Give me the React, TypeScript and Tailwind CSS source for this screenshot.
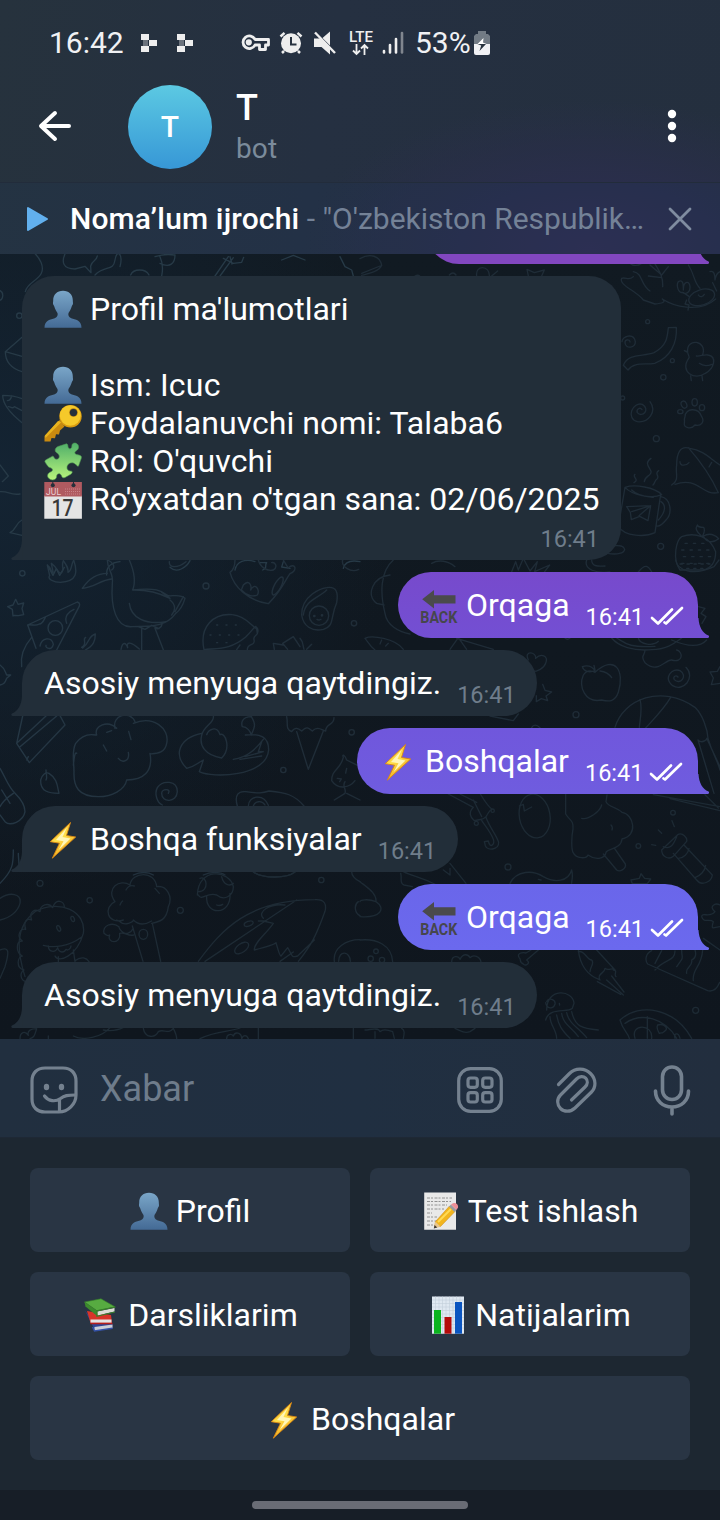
import type { ReactNode } from 'react';

type EmojiName = 'user' | 'key' | 'puzzle' | 'calendar' | 'back' | 'bolt' | 'memo' | 'books' | 'chart';

function EmojiArt({ name }: { name: EmojiName }) {
  switch (name) {
    case 'user':
      return (
        <>
          <defs>
            <linearGradient id="user" x1="0" y1="0" x2="0" y2="1">
              <stop offset="0" stopColor="#7aa6c8" />
              <stop offset="1" stopColor="#446a95" />
            </linearGradient>
          </defs>
          <path fill="url(#user)" d="M19 .7c6 0 9.800 3.800 9.800 9.600 0 1.700.3 2 .2 3.200-.1 1.500-1 1.700-1.300 3-.8 3-2.200 5-3.200 6.500-.6 2 .2 4.300 2.700 5.200 4 1.500 10.300 1.600 10.300 9.600H.5c0-8 6.300-8.100 10.300-9.600 2.500-.9 3.300-3.200 2.700-5.200-1-1.500-2.400-3.500-3.200-6.500-.3-1.300-1.200-1.500-1.300-3-.1-1.200.2-1.500.2-3.200C9.200 4.500 13 .7 19 .7Z" />
        </>
      );
    case 'key':
      return (
        <>
          <path fill="#c98a10" d="M15.500 16 .5 32v5.500h6l1-3.500 3.500.3 1-4 3 .2 1-4 4.500-4Z" />
          <path fill="#e8b31e" d="M14 17 1 31.500l.5 2.500L17.500 18Z" />
          <ellipse cx="26.500" cy="12.300" rx="11.200" ry="11.300" fill="#d99a10" />
          <ellipse cx="26.300" cy="11.500" rx="10.500" ry="10.300" fill="#f5c92a" />
          <circle cx="29.500" cy="8.500" r="4.300" fill="#b87d0c" />
          <circle cx="29.500" cy="8.600" r="3.600" fill="#25303b" />
        </>
      );
    case 'puzzle':
      return (
        <>
          <defs>
            <linearGradient id="puzzle" x1="0" y1="0" x2="0" y2="1">
              <stop offset="0" stopColor="#4fae6a" />
              <stop offset="1" stopColor="#b9f57c" />
            </linearGradient>
          </defs>
          <path fill="url(#puzzle)" stroke="#4d9a52" strokeWidth=".6" d="m14 4.500 8.500-2.700c2 .5 1 3 2 4.300 1.500 1.500 3.300.3 3.300-1.600C27.800 1 30.500.5 32.500 1.500s3 4 1 6.300c-1 1.200-3 1.500-2.700 3.300.4 1.600 3 1.700 5 2.200 1.300.5 2 1.400 1.500 3L34.500 24c-1.500 1-2.500-2.500-5-3-3-.8-6 1-6.500 3.800-.4 2.700 1.500 4.500 4.500 4.400 1.500.3.500 1.700-.3 2.800L21 35.500c-2 1-3-.4-3.600-2-.7-1.800-2.700-2.400-4-1.200-1.200 1.200-.4 3-1.500 4.300-1.700 2-5.600 1.700-7.400-.6-1.700-2-.8-4.500 1-5.500 1.300-.9 3-1 3-2.700 0-2.200-3.500-1.700-4.800-3.800L1 20c-.4-1.300.3-1.800 1.500-2.500l6-3.300c1.500-.3 1.200 2 3 2.900 2.200.8 4-.8 3.800-3-.2-2.500-3.300-3-4-5-.6-2 1-3.900 2.700-4.600Z" />
        </>
      );
    case 'calendar':
      return (
        <>
          <path fill="#e4e4e4" d="M.3 15.500h37.600v23.200H.3z" />
          <path fill="#b05a60" d="M.3 2h37.600v14.500H.3z" />
          <circle cx="8.800" cy="5.300" r="2" fill="#26303a" />
          <circle cx="29.500" cy="5.300" r="2" fill="#26303a" />
          <path stroke="#26303a" d="M8.800 2v3m20.700-3v3" />
          <path stroke="#c98489" strokeDasharray="1 1" d="M21 9h15M21 11.500h15M21 14h15" />
          <text x="2" y="14.500" fontSize="8.500" fill="#ead0d2" fontFamily="Roboto" textLength="15">JUL</text>
          <text x="7.500" y="35.800" fontSize="24" fontWeight="500" fill="#383838" fontFamily="Roboto" textLength="22" lengthAdjust="spacingAndGlyphs">17</text>
        </>
      );
    case 'back':
      return (
        <>
          <path fill="#4a4a4c" d="M2.200 13.200 14 4v5.200h21.500V17.500H14V22.500Z" />
          <text x=".3" y="36.500" fontSize="17" fontWeight="700" fill="#46464c" fontFamily="Roboto" textLength="37" lengthAdjust="spacingAndGlyphs">BACK</text>
        </>
      );
    case 'bolt':
      return (
        <>
          <defs>
            <linearGradient id="bolt" x1="0" y1="0" x2=".5" y2="1">
              <stop offset="0" stopColor="#f3a51e" />
              <stop offset=".5" stopColor="#ffe04a" />
              <stop offset="1" stopColor="#f0a218" />
            </linearGradient>
          </defs>
          <path fill="url(#bolt)" stroke="#d98612" strokeWidth=".9" d="M26.500 2.500 6.300 21.700l9.200 1.500L8.300 38.200 31.700 17l-9.200-1.500Z" />
          <path fill="#fff6b8" d="m23 7.500-11 12.500 7.500 1.200-5 9 12-11.700-8-1.500Z" />
        </>
      );
    case 'memo':
      return (
        <>
          <path fill="#e9e9e9" d="M2.200.5H34v37.200H2.200z" />
          <path stroke="#888" strokeWidth=".9" strokeDasharray="3 1 2 1.500" d="M5 6h25M5 9.500h24M5 13h20M5 17h17M5 21h5M5 25h10M5 29h10M5 33h7" />
          <path fill="#f2b51e" stroke="#c98712" strokeWidth=".5" d="m27.500 14 5.500 5.500-14.500 15-6 .7 1-5.700Z" />
          <path stroke="#ffda55" strokeWidth="2" d="m29 17-13 13" />
          <path fill="#e8c68e" d="m13.400 29.500 5 5-6.300 1.700Z" />
          <path fill="#3d3a36" d="m12.600 33 2.600 2.500-3.400 1Z" />
          <path fill="#9b9da0" d="m27 14.500 2-2 5.500 5.500-2 2Z" />
          <path fill="#ee8f96" d="m29 12.500 2-1.300c3-.8 5.500 1.500 5 4.300L34.500 18Z" />
        </>
      );
    case 'books':
      return (
        <>
          <path fill="#2f4595" d="m3 14.500 8 16 1.500 4.500 18-3v-4L10 24Z" />
          <path fill="#c9cdd8" d="m12.500 31 18-2.500v3.700L12.500 35Z" />
          <path stroke="#3451a6" strokeWidth="1.400" d="m10.500 31 2 4 18-2.700" fill="none" />
          <path fill="#d8342a" d="m5 15 3.500 12h21.500L29 19Z" />
          <path fill="#e4e4e4" d="M8.500 23.500h21v3.300h-21z" />
          <path fill="#b51f1d" d="M8 26.800h22.500v1.500H8.500Z" />
          <path fill="#57ab41" stroke="#347d28" strokeWidth=".6" d="M2.500 6 19 2.800l14 8-18 4Z" />
          <path fill="#3c8a2d" d="M2.500 6 15 14.800V20L3.500 10.500Z" />
          <path fill="#dcdcd6" d="M15 15.500 32.500 12v3.500L15.500 19.600Z" />
          <path stroke="#397f2c" strokeWidth="1.200" fill="none" d="M33.500 11 15 14.800V20.300l18-4.300" />
        </>
      );
    case 'chart':
      return (
        <>
          <path fill="#dfe8f1" d="M3 .5h32v37.200H3z" />
          <path stroke="#c3cfda" strokeWidth=".6" d="M3 4h32M3 7.500h32M3 11h32M3 14.500h32M3 18h32M3 21.500h32M3 25h32M3 28.500h32M3 32h32M6.500.5v37M10 .5v37M13.500.5v37M17 .5v37M20.500.5v37M24 .5v37M27.500.5v37M31 .5v37" />
          <path fill="#0bb41f" d="M5 14h7v23.700H5z" />
          <path fill="#b40a0a" d="M15.500 21h7v16.700h-7z" />
          <path fill="#0b55c0" d="M26 6h7v31.700h-7z" />
        </>
      );
  }
}

function Emoji({ name }: { name: EmojiName }) {
  return (
    <svg className="mr-2 inline-block h-[38px] w-[38px] shrink-0 overflow-visible align-top" viewBox="0 0 38 38" fill="none">
      <EmojiArt name={name} />
    </svg>
  );
}

function Wallpaper() {
  return (
    <svg className="absolute inset-0 h-full w-full" viewBox="0 254 720 785" fill="none" strokeWidth="4" strokeLinecap="round" strokeLinejoin="round">
      <defs>
        <linearGradient id="ink" gradientUnits="userSpaceOnUse" x1="0" y1="0" x2="1080" y2="300">
          <stop offset="0" stopColor="#263947" />
          <stop offset="1" stopColor="#1f2c37" />
        </linearGradient>
      </defs>
      <g transform="translate(0 260) scale(.33333)" stroke="#273a47">
        <path d="M106-18c12 12 28 36 18 58S80 70 76 95M195-18c-10 22-8 45 30 45l30-8 18 19-1-20c6-20 16-12 20-30M285 45c30-30 55-10 60-45s25-20 15 20M392 45c8-20 45-20 55 0M465-10c30-5 25-10 60-5 0 25-15 40-45 25M480-10c8 18 10 35 5 58M645 48l40-58M660 48l40-55M670-5l30 15 25-3 6-15M690-10l6 22M845 0l35-14 35 14M1020-10l15 30 20 10 5 18" />
        <circle cx="58" cy="167" r="8" /><path d="M0 92c12 6 10 25 0 29M66 232 16 275c0 35 25 52 50 60M16 275l50 14M66 416c-20-8-40-10-58-10 0 25 20 52 58 82M25 440c10 0 10 8 18 0l23 12M35 408c-2 8-5 14-13 14M0 615l25 33-18 17M0 695c25-3 30 12 60 7M66 780c-20 10-16 28-36 38l36 8" />
        <path d="M145 920l14 26 10-20 10 20 14-24M320 945c-2-30 20-38 40-40M510 922c20 20 50 0 60-20M705 930c5-25 30-35 60-25M780 908h20c-8 8 5 15-12 22M850 905l-5 16 25 4M1030 925c5-20 25-25 50-20" />
      </g>
      <g transform="translate(360 260) scale(.33333)" stroke="#1f2c37">
        <path d="M0-4c30-18 60-8 65 20-10 20-40 25-60 30M5 40 60 18M165 48c8-4 12-2 14 0M268 45c8-8 14-8 20 0M350 48c-5-35 40-32 38 0M395 48l18-15M505 48l-4-20 22 10 30-8-8 18M785 55c-10 20 45 38 65 65l35 12c20-2 35-5 22-15 30 20 110 45 160 0M785 55c10-5 25 8 35-5M820 35c30 5 20 40 50 58M875-5c20 35 35 50 33 85M870 15l35 30 20-25M985 15c20 30 15 50 35 70M810-10c-10 30 20 30 35 20l-5-20M865 48l40 5" />
        <ellipse cx="1025" cy="112" rx="40" ry="23" transform="rotate(-18 1025 112)" />
        <path d="M955 65c15-8 15 8 15 25 0-28 20-30 20-8 0 20-20 22-22 15-13 5-20-22-13-32M1050 35c12-5 15 10 15 25 3-20 15-25 15-25M970 98l18 12M1058 68l12 25M980 120l-5 12 12 3-3 15M1015 105c5 8 15 5 18-2" />
        <circle cx="863" cy="185" r="6" /><circle cx="937" cy="302" r="6" /><circle cx="910" cy="352" r="8" /><circle cx="788" cy="414" r="6" /><circle cx="889" cy="536" r="9" /><circle cx="902" cy="859" r="9" />
        <path d="M786 245c0-16 35-28 40 0 0 18-28 24-31 4-1-12 15-12 15-3M925 203l24-1c3 48-18 90-65 108-30 5-62-5-80 20l-14-14c15-38 60-25 92-38 38-20 40-45 43-75ZM1028 285c15-45-50-52-45-10l-10-3 10 5c2 12 8 15 3 18-28 40 18 68 50 45 28-15 35-50 8-55-10-3-25 5-35 3M1018 310c10 8 20 10 38 3M992 348l2 14M1026 348l2 14" />
        <path d="M870 425c22 30-5 64-38 60-35-10-15-60 15-52 25 15 0 42-15 25-4-10 8-18 14-9" />
        <path d="M975 470c0-25 40-30 50 0 10 15-2 30-20 25-12 15-35 8-32-5 2-8-2-10 2-20Z" /><ellipse cx="972" cy="434" rx="8" ry="11" transform="rotate(-25 972 434)" /><ellipse cx="1004" cy="427" rx="8" ry="11" /><ellipse cx="1026" cy="443" rx="8" ry="9" /><ellipse cx="961" cy="455" rx="8" ry="6" />
        <path d="M935 675c25-15 10-35 15-60 0-35 10-60 40-50 40 5 65 35 90 50M985 563c35 40 65 80 90 135-50 10-60-50-130-25M960 605c0 15 20 12 27 3M1055 607l-8 14M825 643c-10 8 15 15-3 25M873 595c-30 20 15 35-5 50-10 8-15 10-15 20M896 632c-15 10 5 15-5 25-8 5-5 12-12 18M795 682 775 800c20 30 80 32 110 18l17-115M795 682c30-10 90 0 110 22-30 15-90 0-110-22ZM815 690c20 20 50 20 65 22M903 710c30 5 35 50 15 70-10 12-20 20-28 18M903 725c15 10 15 30-8 55M800 740l72-3-8 45-25-13-25 10-3-22ZM815 755l57-18-35 30" />
        <path d="M965 830c40-15 85 0 102 45 0 25-10 50-40 55H960c-25-35-10-90 5-100ZM1012 795c-12 18 10 30 15 35 5-12 10-18 4-28-8 0-18-2-19-7ZM1030 828c18-10 35-3 46 8-15 12-35 15-46-8" />
        <path strokeDasharray="7 18" d="M975 850h75M965 870h90M970 890h85M965 910h90" />
        <path d="M742 880c30 5 50 0 52-12-5-18-30-8-40-12" />
      </g>
      <g transform="translate(360 560) scale(.33333)" stroke="#1f2c37">
        <path d="M100 0C60 35 60 100 75 160c5 35 40 55 75 62M90 45C40 50 15 105 50 130l22 5M215 10c20-12 50-8 70 10M455 35l12-30 8 25 15-35 20 38 22-28-8 30 45-20-15 20M680 0c-10 30 30 40 70 36M695 0c0 18 15 20 40 18M835 36c20-25 30-20 40 0" />
        <path d="M947 0c5 30 50 50 115 20l15-20" /><path strokeDasharray="7 14" d="M960 12h90M980 25h65" />
        <path d="M15 235c20-10 90 0 115 33M15 235c10 12 15 25 30 35M65 240l-5 12M85 250l-8 8M270 268l25-35 25 35M290 235l110 33M505 300c-15-30 25-25 22-5 15-15 40-10 30 15-5 15-25 25-40 25M548 373l7 18 20 5-17 12 5 14-19-6-15 9v-18" />
        <path d="M755 234c20 25 65 40 120 35 50 0 75-25 90-35M770 234c25 15 35 30 115 25M835 234c5 20 45 25 60 10M855 270c0 18-15 15 0 38 40 35 60-10 80-8 35 10 35-25 15-30M1015 140l20 5-12 15 15 10-12 20M935 240c35 15 80 28 105 0" /><path d="M615 234c5 5 10 5 15 0" />
        <path d="M705 337c60-55 90-5 70 60-10 30-30 28-50 23-50 10-70-40-55-75 8-12 20-16 35-8ZM667 320c15-5 28-2 38 12-20 8-35 0-38-12ZM705 330l-3-14M720 333c15 2 25 5 35 20" />
        <path d="M978 322c30 30-8 75-40 55-30-25 0-55 22-45 25 15 0 45-17 27-5-10 5-15 11-8M1080 320l-8 14-22 2 10 18-6 20 26-4" />
        <circle cx="648" cy="464" r="9" /><path d="M765 502c25-85 140-130 240-60 20 20 38 60 40 100M840 418c8 30 0 60-2 84M932 412c-20 35-60 75-75 92M1014 540c10 10 20 5 30-5 15 50 30 70 36 95M1014 540l48 160M1040 535l40 85M390 468l70 14 15-20M515 503c5-10 15-10 25 0" />
      </g>
      <g transform="translate(0 560) scale(.33333)" stroke="url(#ink)">
        <circle cx="67" cy="40" r="8" /><circle cx="618" cy="78" r="9" /><circle cx="1062" cy="190" r="8" /><circle cx="1055" cy="517" r="8" /><circle cx="850" cy="630" r="8" />
        <path d="M142 15c15 10 10 25 18 25l-6-30c20 15 20 30 28 30 15-8 0-20 8-38 10 15 15 20 14 35 12-5 8-20 17-37 12 35 12 65-40 67-20 0-40-10-32-20ZM508 5c-2 20 25 20 50 0M1028 0c-5 20 25 40 48 28" />
        <path d="m47 118 7 15 17-4-5 17 5 18-16 3-12-1-4 2-2-20-14-8 16-5Z" />
        <path d="M232 126c10 3 8 10 2 20L170 270M232 126 83 195l25 70M83 195c15-3 20 5 35-3 10 0 15-15 18-20M200 190c-8-20 5-35 22-42M120 258c5-25 35-30 40-5-5 20-25 12-22 3M65 320c-5-35 10-65 30-88" /><circle cx="166" cy="204" r="22" />
        <path d="M245 262c20-10 0-25 12-30M248 264c25-20 15-35 38-42 0 20-5 35-30 48" />
        <path d="M322 40c-30 0-55 15-75 45 35-3 55-25 88-28M335 30c15-10 0-25-12-30M322 0c0 30 20 40 15 70-5 70 10 135 60 130 70 0 105-5 130-40 15-10 22-25 28-45-15-15-40-5-50-8-20-15-40-25-107-17 10-25 5-55-10-90M405 90c50 0 85 15 105 25l-25-18M388 130c5 45 50 65 110 55M510 120c20 15 15 35 5 45M525 155l25-45M425 205v64M465 205l25 64M415 200l20 8 20-12 22 10M487 190c-2 12-15 22-22 12M363 268c5-25 15-20 20-5-5-20 10-18 35 4" />
        <path d="M705 0c0 20-5 30-15 37 12 45 55 85 115 94 40-40 50-70 65-90 25-10 15-35-5-18M850 0l15 25M775 0c5 20 25 35 45 30 15-10 5-25-5-22M730 75c20-20 25 5 22 15 12-25 30 0 20 15-10 5-30 5-48-15Z" /><ellipse cx="833" cy="78" rx="10" ry="30" transform="rotate(28 833 78)" />
        <path d="M612 269c-15-70 30-110 85-105 45 3 70 50 75 40 10 25-15 20-10 35 5 20-20 10-20 30M612 269c45-5 80 0 125-38 35-35 30-45 35-10M720 255l-10 14" /><path strokeDasharray="3 25" d="M650 195h80M630 225h90M650 248h40" />
        <path d="M905 165c0-60 60-80 75-82 30-5 35 15 30 45-20 45-5 70-40 80-35 8-60-10-65-43ZM910 165c5-45 45-50 70-75" /><circle cx="957" cy="167" r="29" /><circle cx="943" cy="168" r="2" /><circle cx="966" cy="166" r="2" /><path d="M951 178c5 3 8 3 12 0M823 268l-3-18 30 5M863 268l-15-18 32-20 20 30M900 235c10 10 8 20 12 33M920 268l15-15" />
        <path d="M68 468 50 550l38 58 107-113-15-28M50 550l88-82M60 560l110-92M80 600l5-10M0 315c15 10 15 20 20 30l12 0-12 10c-5 15-10 18-20 20" />
        <path d="M290 525c-10-30 35-45 60-20M345 505c-10-40 45-55 60-20M400 490c60-25 110 15 100 60-5 30-30 30-50 32M450 580c10 55-20 80-70 80M380 660c-5 30-45 50-85 50-60 0-75-30-73-75 0-30-8-60 5-85 15-20 35-30 60-25M220 615c3-25 5-40 10-35M320 517l15-5M310 555l10 18M386 514l7 25M355 595c12 15 35 10 30-18" />
        <path d="M640 468c5 20-30 30-35 58-8 30 10 60 60 68 30-30 10-80-5-70-10-30-35-15-40 0M605 520c-70 15-85 65-45 105 25-5 30-15 50-25l-12 35c40 20 200 15 208-65 0-40-25-50-70-45M755 470c-35 0-30 25-28 30 15 0 25 15 27 25 10-25 15-30 0-55M700 598c45-5 70-35 90-60M735 590l55-15-15 0 10-30M720 598l65-10" />
        <path d="M860 470c5 25-5 35 15 45 10-15 20-10 30-2 15-15 20-10 32 0 15-15 25-5 40 0 0-25 25-15 25-40M890 515l35 113 45-115" />
        <path d="M138 630c0 15 5 20 0 30M122 660c-2 35 25 40 55 40-5-20-5-45-30-60-10-5-22 5-25 20ZM505 700c10-15-20-15-20 0 0 30 45 28 47-5 0-35-45-35-60-12-10 20 0 45 15 52" />
        <path d="M0 625c20 35 25 55 45 75 15 15 30 35 30 55-5 30-45 45-60 30L0 765M5 690l25 40M40 700c-15 10-30 20-40 40" />
        <path d="M712 738c-10-35 5-45 25-43 40 5 50 5 70-2 50 5 75 10 105 45M745 738c0-30 45-40 60-2M760 738c5-15 25-18 35-3M1080 620l-40-20c-5-15-15-20-10-8-10 40-35 35-35 70 20 30 55 20 70 0M1035 665c-10 15 5 20 0 35l-32 20M1040 700l40 20M1040 625l-3 14M1012 655l12 2-5 8" />
        <path d="M0 970c40-40 40-60 40-100M55 880c0 20 5 40 0 50M400 945c20-10 45-10 60 0M610 945c20-10 50-10 65 0M760 936c30 20 100 20 125 0" />
      </g>
      <g transform="translate(0 860) scale(.33333)" stroke="#1e2b35">
        <circle cx="120" cy="70" r="9" /><circle cx="269" cy="121" r="8" /><circle cx="541" cy="151" r="9" /><circle cx="964" cy="60" r="8" />
        <path d="M0 115c30-20 65-15 60 15-10 35-40 45-60 50M0 270c25-10 30 0 15 50L0 355M75 350c-25-80-30-150 30-195 75-40 155 0 145 65-20 70-75 90-85 68M130 256c30 8 75 5 115-25M145 258c0 18 20 22 28 5 5 18 20 15 25 5 5 5 15-2 15-10M220 270l5 35M175 290v15M225 302c20-15 35-8 42 3" />
        <path d="M82 365c-20 0-25-25-10-35-25-5-20-40-5-42-20-10-20-45 0-45-20-15-5-40 10-35-8-25 5-35 18-28-10-25 10-35 25-25 0-20 25-30 38-12 10-30 35-20 35-2" /><ellipse cx="176" cy="205" rx="5" ry="9" transform="rotate(-25 176 205)" /><ellipse cx="218" cy="177" rx="5" ry="8" transform="rotate(-20 218 177)" />
        <path d="M370 180c-50 15-60-40-25-55-30-40 15-70 45-50 5-40 75-45 80 5 30-5 50 30 35 60-5 40-25 45-50 50M350 180l10 5c15 15 40 0 40-5 15 15 35 15 55 3M378 90c5-10 15-15 25-12M368 123c-5 3-5 5-8 12M465 85l13 15M397 198l32 106M457 190l25 114M400 205c-20 35-45 0-43-5-20-15-50-5-45 20 5 5 10 10 17 5-10 25 35 30 30-5 15-5 25 10 42 5" /><ellipse cx="430" cy="223" rx="13" ry="15" />
        <path d="M592 105C595 20 690 30 700 80c0 25-25 45-50 25-30-10-45 20-55 0M600 55c20-10 30 40-5 40M665 50c5 25 25 30 35 20M620 108c-5 60 75 60 70-8M650 135c8 3 12 2 18-2" />
        <path d="M595 304c70-95 150-185 350-185 30-2 35 15 30 35-25 70-40 100-80 150M615 304 890 120M775 183l15 0 30 7c-20 30-60 60-57 80 20-5 60-15 65-22 5 15 10 40 15 40l20-25c15 25 10 30 30 25l50-48M790 175c-20-20 20-45 65-40M840 304l40-28" /><ellipse cx="725" cy="264" rx="24" ry="13" transform="rotate(-35 725 264)" /><ellipse cx="746" cy="191" rx="14" ry="7" transform="rotate(-20 746 191)" />
        <path d="M1003 304c-5-40 35-65 77-65M1016 304c0-35 35-30 35 0M760 36c30 20 100 20 125 0M1080 65c-15-8-25-20-25-30M1075 125c-15 10-10 35 5 42" />
        <path d="M60 536c0-20 15-25 25-10-5-15 10-20 25-20-5 15-5 25-20 30M145 528v8M220 528c30 15 85 5 110-25M310 510c30 5 45 0 60-8M430 505c5 30 35 30 45 10 15-10 30 10 45-10M520 505c5 10 10 20 10 31M600 536c50-25 90-20 120-32M680 536c0-15 15-15 20-8 5-15 25-10 25 8 5-12 15-12 20 0M775 505v31M1060 505v31" />
      </g>
      <g transform="translate(360 790) scale(.33333)" stroke="#1d2a34">
        <circle cx="444" cy="231" r="9" /><circle cx="835" cy="168" r="7" /><circle cx="939" cy="68" r="7" /><circle cx="1007" cy="661" r="9" />
        <path d="M265 12l75 40c-15 15-10 30 3 40 15-5 25 0 35-12 10-15 10-20 18-22-15-12-25-30-35-46M340 30l25 50M300 12l50 25M378 82c10 30 30 50 38 75 0 25-35 25-40 10l-3-12 12-2c5 25 20 10 15-5-10-25-25-40-37-60" /><circle cx="398" cy="62" r="5" /><circle cx="349" cy="100" r="6" />
        <ellipse cx="524" cy="78" rx="46" ry="66" transform="rotate(-10 524 78)" /><path d="M478 48l12-5 3 20 22-12" />
        <path d="M617 12v60c10 18 25 18 22 45-5 25-5 60 0 70 10 20 40 20 45 8 20 15 50 15 55-10 10-10 45-10 47-38 50-10 35-75 0-80-15-15-40-15-48-32l3-20M665 85c20 5 55-20 60-40M753 105c5 5 5 10 3 15M730 192l40 48c10 8 30-5 26-18l-32-46" />
        <path d="m905 180 48-46c15-8 30 10 27 20l-40 45c-15 12-35 0-35-19ZM910 170c20 10 30-5 40-30M940 190l70 80c15 20 45 5 47-15l-85-90M955 205c15 0 30-15 32-30M1005 263c15-5 30-20 32-37M895 120l10 10M875 164l12 2M936 92l7 18M1080 50 880 14M1080 62 930 26M1035 14l40 40" />
        <path d="M813 270l25-5 5-14 11 14 18 2-10 14h-45ZM450 280c20-40 70-40 100-20 35 20 75 15 85-20 5 20 0 30 0 40M535 268l8 2M122 250c5 15-5 30 10 35l25 5M270 220l48 60M130 245c30 15 50 15 100 40M250 240l20 15 0-20" />
        <path d="M0 275c25 20 50 35 48 60-25-10-48-5-48 0M48 335c30 20 15 50-48 45M0 450c50-5 95 15 98 65M1080 345c-15-8-35 5-15 20-15 20-40 0-40 15 5 20 25 5 35 15-10 30 5 15 20 15M1030 445l50 35" /><circle cx="48" cy="484" r="7" /><circle cx="32" cy="506" r="8" /><circle cx="66" cy="510" r="8" />
        <path d="M275 516c0-20 20-20 25-8 10-20 25-15 30-5 10-10 30-5 33 13M535 480l-35 30c15 10-5 20-10 12-15-5-5-15-12-18-10-15 10-18 20-15l15-9M655 480c5 45 25 75 65 90-10-20 15-20 15-35 10 10 25-5 25 5 15 0 0 15 8 20M655 485c20-5 25 25 40 25 10 10-5 20-5 35M710 480l55 60M712 575l70 38M740 570l50 45M755 558l37 48" />
        <path d="M875 482c-20 10-20 30-12 40l180 80c20 5 30-10 36-25M885 520l20-38M885 540c30-35 60-25 60-57M950 530c25-35 15-20 15-50M980 550c-5-20 20-20 15-40 10-5 15-15 10-30M1000 572c-5-35 25-40 28-92" />
        <path d="M560 660c0-70 80-60 82-20l-5 15c-15 15-70-5-80 35M560 635c5-15 28-5 25 8-5 15-25 15-28-5M570 680c0 25 20 40 20 65M590 675c5 30 15 45 40 70M605 670c5 35 30 40 50 70M620 668c5 30 35 45 60 75M635 665c10 45 30 50 80 55M598 640l1 5" />
        <path d="M780 690c60-55 165-35 215 55M780 690c8 30 25 40 28 55M795 700c50-35 120-15 155 45M862 680v65M825 745c-15-45 55-45 50 0M893 705c15-5 30 5 25 15-15 15-10 5-20 10-5-10-10-15-5-25M945 745c-5-15 10-20 15 0M15 720c15 0 40-10 45 5 10-10 25-5 38 0l5 20M45 725l0 20M125 715c10 5 8 15 5 30M285 715c20 10 30 15 45 10l15-10" />
      </g>
    </svg>
  );
}

function Ticks() {
  return (
    <svg className="mb-3 ml-1.5 h-5 w-[34px]" viewBox="0 0 34 20" fill="none" stroke="#fff" strokeWidth="2.700" strokeLinecap="round" strokeLinejoin="round">
      <path d="m2 12 6 5.500L22 3.500M14.500 16.500l1.500 1L32 2" />
    </svg>
  );
}

function Incoming({ children, width }: { children: ReactNode; width: string }) {
  return (
    <div className={`relative flex h-[66px] shrink-0 items-end rounded-[33px] rounded-bl-none bg-[#222e39] pl-[22px] ${width}`}>
      <svg className="absolute bottom-0 -left-[11px] h-5 w-[11.500px]" viewBox="0 0 11.500 20" fill="#222e39">
        <path d="M11 0C10.500 9 7 15 1 17.500c-1 .8-1 2 .5 2.500h10V0Z" />
      </svg>
      <p className="mb-[14px] flex tracking-[0.03px]">{children}</p>
      <span className="mb-[7px] ml-4 text-[23.5px]/7 text-[#6f7d8b]">16:41</span>
    </div>
  );
}

function Outgoing({ emoji, text, look }: { emoji: EmojiName; text: string; look: string }) {
  return (
    <div className={`relative mr-[22px] flex h-[66px] shrink-0 items-end self-end rounded-[33px] rounded-br-none pl-[22px] ${look}`}>
      <svg className="absolute -right-[11px] bottom-0 h-5 w-[11.500px]" viewBox="0 0 11.500 20" fill="currentColor">
        <path d="M.5 0C1 9 4.500 15 10.500 17.500c1 .8 1 2-.5 2.500H0V0Z" />
      </svg>
      <p className="mb-[14px] flex text-white">
        <Emoji name={emoji} />
        {text}
      </p>
      <span className="mb-[7px] ml-4 text-[23.5px]/7 text-white">16:41</span>
      <Ticks />
    </div>
  );
}

function StatusBar() {
  return (
    <div className="flex h-[85px] items-center pl-[49px] text-[#f0f1f4]">
      <span className="w-[92px] text-[30px]/9">16:42</span>
      {[0, 1].map((n) => (
        <svg key={n} className="mr-5 h-[18px] w-4" viewBox="0 0 16 18" fill="#eee">
          <path d="M0 0h8v6H0zM0 12h8v6H0zM8 6h8v6H8z" />
          <path d="M2 6h5v6H2z" opacity=".35" />
        </svg>
      ))}
      <svg className="ml-7 h-[18px] w-[29px]" viewBox="0 0 29 18" fill="none" stroke="#eee" strokeWidth="2.800" strokeLinejoin="round">
        <path d="M14 5.500h13.500v5.500h-3v4.500h-6V11H14a6.300 6.300 0 1 1 0-5.500Z" />
        <circle cx="7.800" cy="8.300" r="1.700" fill="#eee" />
      </svg>
      <svg className="ml-[9px] h-6 w-6" viewBox="0 0 24 24" fill="#eee">
        <circle cx="12" cy="12.300" r="10" />
        <path d="m1.500 5.500 4-3.700M22.500 5.500l-4-3.700M5 20l-2 2M19 20l2 2" stroke="#eee" strokeWidth="2.500" />
        <path d="M12 6v7.500h5.500" stroke="#27323f" strokeWidth="2" fill="none" />
      </svg>
      <svg className="ml-[10px] h-6 w-6" viewBox="0 0 24 24" fill="#eee">
        <path d="M9.500 7 17 .5v14ZM1 7.500h6l10 9.500v6.500L8.500 16H1Z" />
        <path d="M2 1.500 22 22" stroke="#eee" strokeWidth="2.400" />
      </svg>
      <svg className="ml-3 h-[26px] w-6 overflow-visible" viewBox="0 0 24 26" fill="none">
        <text x="0" y="12.200" fontSize="15" fontWeight="500" fill="#eee" fontFamily="Roboto" textLength="24" lengthAdjust="spacingAndGlyphs">LTE</text>
        <path stroke="#eee" strokeWidth="1.800" d="M7.500 14v10M4 20.500 7.500 24l3.500-3.500M15.500 25V15M12 18.500l3.500-3.500 3.500 3.500" />
      </svg>
      <svg className="ml-[9px] h-6 w-[22px]" viewBox="0 0 22 24" stroke="#eee" strokeWidth="2.600" strokeLinecap="round">
        <path d="M2 20v1.500M8 14v7.500M14 8v13.500" />
        <path d="M20 2v19.500" opacity=".45" />
      </svg>
      <span className="ml-[11px] text-[30px]/9">53%</span>
      <svg className="ml-[3.500px] h-6 w-4" viewBox="0 0 16 24">
        <path fill="#727b85" d="M4 0h8v3h2l2 2v9H0V5l2-2h2Z" />
        <path fill="#f0f1f4" d="M0 13h16v9q0 2-2 2H2q-2 0-2-2Z" />
        <path fill="#fff" d="m9.500 7-6 6h9L9 11.500Z" />
        <path fill="#26313d" d="M3.500 13h8.500L5.500 20l1.700-5.500Z" />
      </svg>
    </div>
  );
}

function KeyButton({ emoji, text, wide }: { emoji: EmojiName; text: string; wide?: boolean }) {
  return (
    <button className={`flex h-[84px] items-center justify-center rounded-lg bg-[#293544] pt-0.5 text-[32px]/[38px] text-white ${wide ? 'col-span-2' : ''}`}>
      <Emoji name={emoji} />
      {text}
    </button>
  );
}

export default function App() {
  return (
    <div className="flex h-[1520px] w-[720px] flex-col overflow-hidden bg-[#1d2731] font-['Roboto',sans-serif]">
      <header className="flex h-[254px] shrink-0 flex-col bg-[radial-gradient(ellipse_290px_150px_at_590px_250px,#302e52,#2a2e4b_45%,transparent),linear-gradient(100deg,#26323d,#253041_45%,#242f3e)]">
        <StatusBar />
        <div className="flex h-[97px] items-start">
          <svg className="mt-[25px] ml-[38px] h-8 w-[34px]" viewBox="0 0 34 32" fill="none" stroke="#fff" strokeWidth="4" strokeLinecap="round" strokeLinejoin="round">
            <path d="M17 3 3 16l14 13M4 16h27" />
          </svg>
          <div className="ml-14 flex h-[84px] w-[84px] items-center justify-center rounded-full bg-linear-to-b from-[#5cc9e2] to-[#3797d6] pb-0.5 text-[30px] font-medium text-white">T</div>
          <div className="ml-6 flex grow flex-col">
            <h1 className="mt-[1px] text-4xl/[44px] font-medium text-white">T</h1>
            <span className="mt-0.5 text-[28px]/[34px] tracking-[0.1px] text-[#7b8b9b]">bot</span>
          </div>
          <svg className="mt-6 mr-[43px] h-[34px] w-[10px]" viewBox="0 0 10 34" fill="#fff">
            <circle cx="5" cy="5" r="4.200" /><circle cx="5" cy="17" r="4.200" /><circle cx="5" cy="29" r="4.200" />
          </svg>
        </div>
        <div className="flex h-[72px] items-center border-t border-[#222c3b] bg-[#1d3558]/20 text-[30px]">
          <svg className="ml-[26px] h-[26px] w-[22px] shrink-0" viewBox="0 0 22 26" fill="#62b0ee" stroke="#62b0ee" strokeWidth="2" strokeLinejoin="round">
            <path d="M2 2v22l19-11Z" />
          </svg>
          <p className="ml-[22px] w-[573px] shrink-0 whitespace-nowrap text-[#748297]">
            <b className="font-medium tracking-[0.14px] text-white">Noma’lum ijrochi</b> - "O'zbekiston Respublik…
          </p>
          <svg className="ml-[25px] h-6 w-6 shrink-0" viewBox="0 0 24 24" stroke="#7f8ca0" strokeWidth="2.800" strokeLinecap="round">
            <path d="m2 2 20 20M22 2 2 22" />
          </svg>
        </div>
      </header>

      <main className="relative h-[785px] shrink-0 overflow-hidden bg-[radial-gradient(ellipse_400px_420px_at_0px_220px,#142433,transparent),linear-gradient(#111a22,#0f161e)]">
        <Wallpaper />
        <div className="relative flex h-full flex-col justify-end gap-3 pb-[11px] pl-[22px] text-[32px]/[38px] text-white">
          <div className="relative mr-[22px] h-[66px] w-[272px] shrink-0 self-end rounded-[33px] rounded-br-none bg-[#8247c0] text-[#8247c0]">
            <svg className="absolute -right-[11px] bottom-0 h-5 w-[11.500px]" viewBox="0 0 11.500 20" fill="currentColor">
              <path d="M.5 0C1 9 4.500 15 10.500 17.500c1 .8 1 2-.5 2.500H0V0Z" />
            </svg>
          </div>
          <div className="relative flex h-[284px] w-[599px] shrink-0 flex-col rounded-[32px] rounded-bl-none bg-[#222e39] px-[22px] pt-[14px]">
            <svg className="absolute bottom-0 -left-[11px] h-5 w-[11.500px]" viewBox="0 0 11.500 20" fill="#222e39">
              <path d="M11 0C10.500 9 7 15 1 17.500c-1 .8-1 2 .5 2.500h10V0Z" />
            </svg>
            <p className="mb-[38px] flex"><Emoji name="user" />Profil ma'lumotlari</p>
            <p className="flex tracking-[0.2px]"><Emoji name="user" />Ism: Icuc</p>
            <p className="flex tracking-[0.05px]"><Emoji name="key" />Foydalanuvchi nomi: Talaba6</p>
            <p className="flex tracking-[0.14px]"><Emoji name="puzzle" />Rol: O'quvchi</p>
            <p className="flex whitespace-nowrap"><Emoji name="calendar" />Ro'yxatdan o'tgan sana: 02/06/2025</p>
            <span className="mt-[7px] self-end text-[23.5px]/7 text-[#6f7d8b]">16:41</span>
          </div>
          <Outgoing emoji="back" text="Orqaga" look="w-[300px] text-[#734fd3] bg-linear-to-b from-[#774acc] to-[#734fd3]" />
          <Incoming width="w-[515px]">Asosiy menyuga qaytdingiz.</Incoming>
          <Outgoing emoji="bolt" text="Boshqalar" look="w-[341px] text-[#6f5cdf] bg-linear-to-b from-[#7057dc] to-[#6f5cdf]" />
          <Incoming width="w-[436px]"><Emoji name="bolt" />Boshqa funksiyalar</Incoming>
          <Outgoing emoji="back" text="Orqaga" look="w-[300px] text-[#6b69ee] bg-linear-to-b from-[#6a66ea] to-[#6b69ee]" />
          <Incoming width="w-[515px]">Asosiy menyuga qaytdingiz.</Incoming>
        </div>
      </main>

      <section className="flex h-[99px] shrink-0 items-center border-b border-[#1e2835] bg-linear-to-r from-[#212f3f] via-[#202f41] to-[#222e3e] pt-1">
        <svg className="ml-[29px] h-[50px] w-[50px] shrink-0" viewBox="0 0 50 50" fill="none" stroke="#74818f" strokeWidth="3.200" strokeLinecap="round" strokeLinejoin="round">
          <path d="M16 3h18c8 0 13 5 13 13v14c0 9-8 17-17 17H16C8 47 3 42 3 34V16C3 8 8 3 16 3Z" />
          <path d="M15.500 31c4 5.500 11 6 16 2.500 4-3 7-3.500 14.500-3.500M30.500 34v12" />
          <ellipse cx="17.500" cy="22" rx="1.700" ry="2.200" fill="#74818f" strokeWidth="2" /><ellipse cx="32.500" cy="22" rx="1.700" ry="2.200" fill="#74818f" strokeWidth="2" />
        </svg>
        <span className="mb-0.5 ml-[21px] grow text-[36px]/10 text-[#6e7c8b]">Xabar</span>
        <svg className="h-12 w-12" viewBox="0 0 48 48" fill="none" stroke="#74818f" strokeWidth="3.200">
          <rect x="2.700" y="2.700" width="42.600" height="42.600" rx="12" />
          <rect x="12" y="12" width="9.300" height="9.300" rx="2.500" /><rect x="26.700" y="12" width="9.300" height="9.300" rx="2.500" />
          <rect x="12" y="26.700" width="9.300" height="9.300" rx="2.500" /><rect x="26.700" y="26.700" width="9.300" height="9.300" rx="2.500" />
        </svg>
        <svg className="ml-[51px] h-12 w-[42px]" viewBox="0 0 42 48" fill="none" stroke="#74818f" strokeWidth="3.200" strokeLinecap="round">
          <path d="M3.500 18.500 14.500 7.500C20 2 29.500 1.500 35.500 7.500S41 21.500 36.500 26L20 42c-4.500 4.300-11 4-14.500.5S1.500 33 5.500 29l16-16c3-3 7-3 9.200-.8s2.300 5.800-.7 8.800L16.500 34" />
        </svg>
        <svg className="mr-[29px] ml-14 h-[52px] w-[38px]" viewBox="0 0 38 52" fill="none" stroke="#74818f" strokeWidth="3.600" strokeLinecap="round">
          <rect x="9.500" y="3" width="19" height="32.500" rx="9.500" />
          <path d="M2.500 27C2.500 37 10 43 19 43s16.500-6 16.500-16M19 43v7" />
        </svg>
      </section>

      <section className="grid h-[352px] shrink-0 grid-cols-2 content-start gap-5 px-[30px] pt-[30px]">
        <KeyButton emoji="user" text="Profil" />
        <KeyButton emoji="memo" text="Test ishlash" />
        <KeyButton emoji="books" text="Darsliklarim" />
        <KeyButton emoji="chart" text="Natijalarim" />
        <KeyButton emoji="bolt" text="Boshqalar" wide />
      </section>

      <footer className="flex h-[30px] shrink-0 items-center justify-center bg-[#171e27]">
        <div className="h-2 w-[216px] rounded-full bg-[#696c75]" />
      </footer>
    </div>
  );
}
